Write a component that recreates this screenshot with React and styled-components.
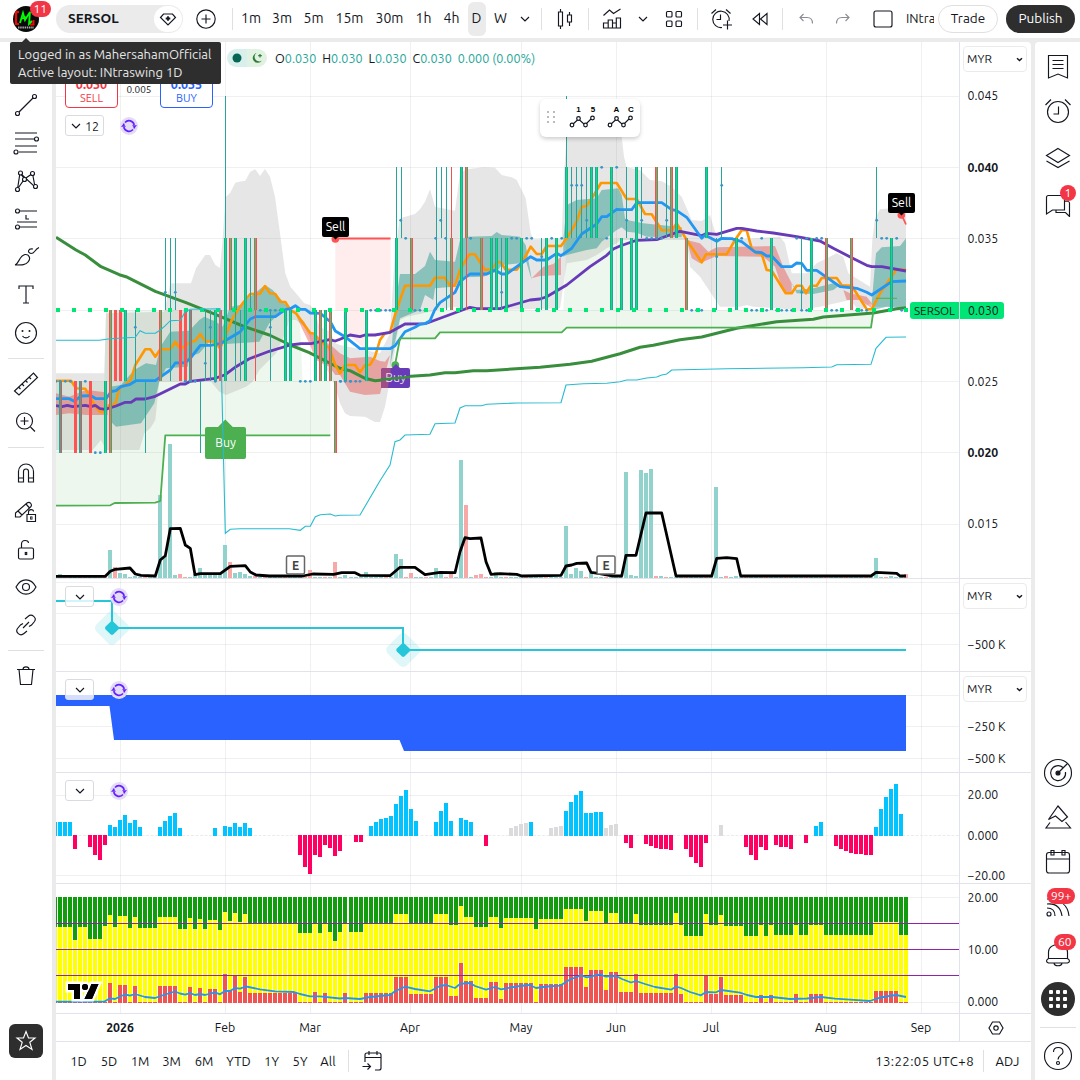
import React from "react";
import styled, { createGlobalStyle } from "styled-components";

const FONT = 'Ubuntu, "Noto Sans", "Open Sans", sans-serif';

// Chart helpers

const barX = (i) => Math.round(225.3 + i * 5.008);

// the series are recorded in thirds of a pixel, in three blocks
const ORIGIN = { a: 56, b: 340, c: 620 };
const trace = (block, text) =>
  text
    .trim()
    .split(/\s+/)
    .map((p) => {
      const [x, y] = p.split(",").map(Number);
      return `${(ORIGIN[block] + x / 3).toFixed(1)},${(140 + y / 3).toFixed(1)}`;
    })
    .join(" ");
const series = (a, b, c) =>
  [a && trace("a", a), b && trace("b", b), c && trace("c", c)]
    .filter(Boolean)
    .join(" ");

const MONTHS = [
  ["2026", 120],
  ["Feb", 225],
  ["Mar", 310],
  ["Apr", 410],
  ["May", 521],
  ["Jun", 616],
  ["Jul", 711],
  ["Aug", 826],
  ["Sep", 921],
];

const LEVEL = { T: 96, A: 167, B: 238, C: 310, D: 381, E: 453 };

// index, kind, from level, to level
// r = red, m = teal with red core, x = red with green core, g = green, t / w = thin teal / red
const CANDLES = `-33mDE -30rDE -29mDE -27rDE -24gDE -23xCE -22rCD -21rCD -20gCD -18tCD -16tDE -13xCD -12tBC
-11tBD -10tBC -9rCD -8rCD -7mCD -5tDE -4tCD -3tCD -2gCD -1rCD 0tTD 0gBD 1xBC 2gBC 2tCD 3tCD 4gBD 5tBC 6xBC 6wCD
9tCD 12gCD 13gCD 18gCD 19xCD 20gCD 21xCD 22xDE 24gCD 28gCD 34tAB 34gBC 35tAB 37xBC 42tAC 43tAB 44tAC 45wAB 45xBC
47gAC 48xAB 48wBC 51xBC 53gBC 54gBC 55tBC 56gBC 59gBC 63tBC 64gBC 66gBC 68tTB 68gAB 69tAB 70tAB 71tAB 72tAB 73gAB
74gAB 77gAC 79gBC 80tAB 81gBC 82gAC 83tAB 86xAB 88tAB 89xAB 90gAB 92xBC 96gAB 98tBC 99tAB 102gBC 109gBC 115tBC
117gBC 120xBC 125xBC 130tAB 133gBC`
  .split(/\s+/)
  .map((s) => {
    const [, i, kind, from, to] = s.match(/(-?\d+)(\w)(\w)(\w)/);
    return { i: Number(i), kind, from: LEVEL[from], to: LEVEL[to] };
  });

const DOTS = series(
  "0,724 12,724 28,724 43,724 88,724 118,938 133,938 328,457 358,457 238,562 463,562 448,670 388,724 403,724 418,724 478,724 613,511 628,511 643,511 658,511 673,511 643,562 733,724 748,724 763,724 853,724 868,724 883,724",
  "2,724 32,724 47,724 60,724 92,511 107,511 122,511 137,511 150,511 182,241 197,295 225,511 240,511 255,511 287,295 302,241 317,295 392,295 485,457 515,295 530,295 560,295 575,295 590,511 605,350 635,295 665,295 695,136 710,136 725,136 740,241 785,82 830,82 800,295 860,241",
  "65,241 80,295 95,295 110,295 125,295 140,241 215,511 230,511 245,511 290,350 305,136 365,295 425,295 395,511 410,511 440,511 470,511 485,511 500,511 515,511 545,511 560,511 545,457 530,295 560,295 590,295 605,295 635,511 650,511 665,511 710,511 725,511 740,511 770,241 785,295 800,295 830,295 845,511"
)
  .split(" ")
  .map((p) => p.split(",").map(Number));

const VOLUME = {
  "-33": 4, "-23": 28, "-22": -11, "-21": 5, "-20": 4, "-18": 2, "-13": 83, "-12": 22, "-11": 134, "-10": 3,
  "-9": -4, "-6": 4, "-5": 10, "-4": 5, "-3": 4, "-2": 4, "-1": 4, 0: 33, 1: -16, 2: 5, 3: 6, 4: 4, 5: 2, 6: -2,
  17: -8, 22: -16, 24: 3, 28: 6, 34: 24, 35: 19, 37: -5, 42: 10, 43: 6, 45: -4, 47: 118, 48: -73, 50: -3, 51: -4,
  54: 6, 68: 52, 69: 4, 70: 10, 71: 7, 73: 5, 80: 106, 81: 3, 82: 2, 83: 108, 84: 105, 85: 109, 86: -2, 87: 2,
  98: 91, 100: -2, 102: 2, 130: 20, 133: 2, 136: -4,
};

// start index, heights; the sign gives the direction
const MOMENTUM = [
  [-34, [14, 14, 14, 14, -13]],
  [-27, [-11, -19, -24, -9, 11, 9, 16, 21, 13, 16, 9]],
  [-13, [9, 15, 20, 23, 8]],
  [-2, [8]],
  [0, [10, 9, 13, 9, 13, 8]],
  [15, [-19, -31, -38, -19, -21, -9, -12, -20, -15]],
  [26, [-6, -6]],
  [29, [10, 14, 17, 18, 20, 32, 40, 46, 27, 15]],
  [42, [14, 25, 33, 15]],
  [47, [18, 16, 14]],
  [52, [-10]],
  [57, [8, 10, 12, 13], true],
  [61, [14]],
  [65, [8, 9, 10], true],
  [68, [25, 34, 41, 45, 23, 23, 24, 24]],
  [76, [8, 11, 12], true],
  [80, [-7, -12]],
  [84, [-8, -10, -12, -13, -13, -14]],
  [92, [-13, -21, -27, -31, -7]],
  [99, [11], true],
  [104, [-11, -19, -24, -11, -14]],
  [110, [-9, -11, -11, -13]],
  [116, [-7]],
  [118, [10, 14]],
  [122, [-10, -13, -15, -17, -18, -18, -19, -19, 9, 27, 39, 47, 52, 22]],
];

// run length, green depth, red height (thirds of a pixel)
const STRENGTH = [
  [4, 141, 366], [1, 180, 366], [2, 141, 366], [3, 177, 366], [1, 138, 366], [1, 105, 309], [1, 141, 366],
  [2, 108, 315], [1, 144, 366], [1, 111, 318], [4, 144, 366], [4, 111, 318], [2, 147, 366], [1, 114, 321],
  [1, 147, 366], [1, 117, 324], [1, 147, 366], [2, 120, 327], [1, 150, 366], [1, 96, 282], [1, 123, 333],
  [1, 99, 288], [1, 126, 336], [1, 102, 291], [10, 130, 339], [3, 159, 366], [1, 132, 336], [1, 159, 366],
  [1, 132, 339], [1, 156, 366], [1, 183, 366], [1, 156, 366], [1, 132, 339], [3, 156, 366], [6, 132, 339],
  [3, 102, 291], [5, 130, 342], [3, 102, 291], [2, 135, 348], [1, 78, 249], [2, 111, 303], [3, 141, 354],
  [2, 111, 306], [1, 144, 357], [6, 114, 309], [1, 147, 366], [5, 117, 312], [4, 87, 261], [1, 123, 321],
  [3, 93, 270], [1, 129, 330], [2, 99, 276], [3, 130, 336], [1, 102, 282], [7, 135, 339], [1, 99, 282],
  [1, 135, 342], [4, 168, 366], [1, 102, 288], [2, 135, 342], [1, 105, 291], [4, 138, 345], [3, 168, 366],
  [1, 135, 345], [1, 168, 366], [1, 135, 345], [4, 165, 366], [1, 135, 342], [2, 165, 366], [3, 135, 342],
  [10, 165, 366], [5, 126, 333], [2, 165, 366],
].flatMap(([n, green, red]) => Array.from({ length: n }, () => [green, red]));

const STRENGTH_LINE =
  "56,1001.7 104,1001.7 110,998.3 115,999 120,996.5 125,994.5 130,995.7 135,994 145,997 155,998 165,994.5 175,991.5 180,993.5 185,994.7 190,993.2 195,995 200,994 205,995 215,992.3 220,994.3 225,991 230,991 235,988 240,988.7 246,986.5 260,989.3 275,991.3 294,992 300,994 310,996.3 320,996.3 340,998.5 345,998 360,999 370,997 390,995 395,991.3 405,986.7 415,989 430,991.3 440,986 446,985 455,988 460,984 465,983.3 470,983 475,986 486,989.7 495,987 501,989.3 510,987.7 520,986 530,985 536,988 547,986.5 560,985.7 570,979.5 581,975.5 587,977.3 600,974.3 605,976.5 616,976 622,979 631,982.5 636,981 645,984 655,987 671,989.7 676,986.7 681,988 690,992 701,995.3 706,992 716,992.3 721,990 740,992.7 747,995 756,997 772,997 790,999 807,998.5 821,997 835,998.7 850,999.7 870,1001 877,998.5 886,996.5 896,995 906,997";

const SHAPES = {
  grey: [
    series(
      "0,700 145,700 150,520 325,515 343,430 405,430 420,385 448,345 462,345 478,375 492,384 500,295 508,172 523,158 538,128 550,125 568,122 583,95 598,88 612,108 627,87 642,110 657,170 672,280 688,400 703,440 720,460 745,490 763,495 778,520 790,560 823,575 838,610",
      "0,615 120,640 150,580 165,330 180,235 225,222 240,208 255,185 270,148 285,200 345,212 360,100 380,88 430,82 465,83 485,105 515,112 530,120 557,175 572,280 580,298 665,296 672,100 680,-9",
      "5,-9 12,50 20,82 60,90 90,120 125,124 155,140 185,170 215,240 245,243 270,225 285,275 320,300 480,290 495,310 515,400 560,400 590,370 650,340 670,350 685,400 750,440 757,300 765,235 780,208 858,200 858,500 760,500 750,490 720,515 690,480 600,500 540,510 400,500 380,495 360,500 300,500 260,440 240,410 210,380 200,300 0,300"
    ) +
      " " +
      series(
        "",
        "830,310 800,325 770,345 740,360 680,370 660,505 480,510 380,510 340,500 200,530 180,540 150,720 135,800 120,846 105,846 75,830 30,828 15,820 0,790"
      ) +
      " " +
      series(
        "838,740 820,700 790,660 765,600 745,560 720,540 700,540 688,580 660,640 640,660 610,690 590,725 570,740 510,765 490,755 465,725 310,725 298,840 283,865 265,880 250,930 150,930 135,900 110,930 0,930"
      ),
  ],
  teal: [
    series(
      "163,740 195,735 235,690 270,670 300,675 313,620 343,575 400,572 430,540 445,530 480,545 500,560 523,500 553,495 583,470 627,435 650,450 685,490 700,505 670,520 640,550 610,605 510,612 480,610 460,605 430,640 400,650 395,680 330,685 310,725 295,790 255,850 180,860 165,845"
    ),
    series(
      "",
      "150,680 165,500 180,402 225,402 255,378 270,335 285,360 345,365 360,300 380,290 455,288 470,276 485,285 540,290 557,315 572,400 575,420 557,360 540,370 485,375 470,395 430,410 375,412 340,440 285,445 280,480 255,465 240,510 180,535"
    ),
    series(
      "",
      "670,300 680,195 710,180 770,175 785,150 835,145 845,165 855,235",
      "20,240 70,250 185,262 185,292 80,290 50,278 20,275"
    ) +
      " " +
      series("", "845,262 830,270 785,305 770,325 740,330 680,345 670,350"),
    series("", "", "515,430 530,450 580,445 640,430 660,435 640,450 580,462 530,460"),
    series("", "", "755,490 768,340 785,322 840,318 858,295 858,505 800,500 760,510"),
  ],
  pink: [
    series("0,760 40,770 90,750 150,757 155,780 155,825 90,825 40,820 0,825"),
    series(
      "718,520 745,545 763,580 800,600 830,620",
      "0,640 30,655 90,650 120,663 135,665 150,645 120,762 75,765 30,755 0,705"
    ) +
      " " +
      series("838,705 820,680 780,660 760,610 740,570"),
    series("", "575,415 610,380 640,372 663,350 663,405 600,408"),
    series(
      "",
      "",
      "200,300 240,310 265,335 290,322 465,318 490,380 515,430 515,460 490,455 465,380 430,350 290,348 240,370 215,355"
    ),
    series("", "", "670,450 690,460 740,470 755,490 755,505 720,480 680,480"),
  ],
  green: [
    series(
      "0,725 145,725 150,511 730,511 740,724 823,724 823,886 328,886 313,1083 298,1088 176,1089 163,1096 0,1097"
    ),
    series("", "165,670 180,511 670,511 680,296", "195,296 200,511 755,511 755,563") +
      " " +
      series("", "680,563 665,577 300,577 285,595 180,595"),
  ],
};

const CYAN = series(
  "0,601 130,601 163,596 238,592 252,572 268,580 298,580 313,570 328,557 343,542 373,541 388,515 403,508 492,506 495,640 508,1180 523,1168 553,1166 700,1166 733,1171 748,1159 763,1159 778,1130 793,1124 823,1122 838,1128",
  "0,1126 60,1125 120,1022 150,975 165,905 180,900 195,885 270,883 285,851 345,849 360,804 375,797 425,797 440,793 530,789 663,788 678,735 730,731 800,730",
  "0,725 20,720 50,720 80,714 110,711 125,705 140,702 155,690 320,686 550,683 635,681 650,674 753,673 768,625 798,592 858,591"
);
const LONG_MA = series(
  "0,292 60,330 88,345 135,380 190,404 210,410 298,454 390,488 480,524 560,558 640,585 703,615 760,638 838,678",
  "0,685 30,692 75,715 105,722 150,718 190,710 270,705 315,698 345,698 400,692 440,692 600,682 690,673 755,664",
  "0,641 60,622 100,616 180,599 245,591 350,565 470,545 580,538 610,531 760,519 830,506 858,503"
);
const PURPLE = series(
  "0,797 18,800 34,796 50,800 88,796 105,800 118,796 132,806 148,808 180,798 208,787 225,787 240,777 268,777 295,770 373,732 388,732 403,724 478,715 508,704 540,680 580,656 640,634 703,615 735,611 765,611 820,599 838,603",
  "0,598 30,585 60,590 75,585 105,585 150,577 195,552 255,551 270,546 390,502 410,506 480,506 570,480 600,477 620,470 680,435 750,380 800,346 820,327",
  "0,318 50,301 110,299 180,274 245,287 260,280 290,283 350,265 365,265 410,273 460,279 530,290 600,303 640,325 695,353 740,376 755,380 785,380 858,393"
);
const BLUE = series(
  "0,776 40,776 55,784 75,768 105,767 120,776 150,776 165,755 180,752 195,740 220,734 240,722 298,722 343,690 358,669 388,668 403,655 433,616 463,616 495,610 520,595 553,575 583,537 598,530 658,530 675,518 690,508 703,506 718,497 733,508 748,508 763,519 793,520 823,545 838,573",
  "15,590 60,626 150,626 165,617 195,575 225,562 240,553 255,551 270,542 285,508 300,488 345,457 360,425 390,402 440,402 465,390 485,402 500,402 572,350 590,360 620,360 650,340 663,347 695,325 725,282 770,252 785,230 800,230 830,208",
  "0,209 35,209 50,188 125,188 155,209 170,212 200,232 245,295 255,285 290,304 305,295 335,296 365,305 405,336 425,338 440,348 455,348 485,380 515,380 530,369 545,370 560,391 590,391 660,440 710,445 740,457 755,465 815,425 858,423"
);
const ORANGE = series(
  "0,722 45,722 60,745 88,746 105,775 118,800 132,816 145,816 160,795 178,792 190,745 208,735 225,718 238,675 268,628 283,628 298,650 313,628 343,628 358,605 373,628 403,606 418,602 433,582 448,604 478,605 492,625 508,590 525,545 540,518 560,490 583,462 612,461 627,438 642,460 658,462 673,485 688,486 703,510 720,520 740,548 763,579 775,581 790,600 820,625 838,675",
  "0,700 15,675 45,675 60,697 75,675 90,674 105,650 120,600 135,580 150,578 165,525 180,480 195,437 270,437 285,413 315,413 330,437 345,437 360,390 388,343 405,343 435,390 455,388 470,367 482,367 497,389 530,389 545,370 572,320 590,342 605,342 620,318 663,318 680,295 710,245 725,200 740,198 760,168 783,129 830,129",
  "0,145 20,177 50,177 75,222 95,223 125,271 155,271 170,250 200,300 245,367 258,343 320,343 345,300 365,271 380,271 395,325 410,340 425,342 440,390 455,392 497,460 515,460 530,437 545,437 558,460 572,437 590,437 605,414 650,414 665,436 695,437 740,508 755,508 780,460 830,388 858,389"
);
const STOP_A = series("0,1097 163,1096 176,1089 298,1088 313,1083 328,886 823,886");
const STOP_B = series(
  "",
  "165,675 180,595 285,595 300,577 665,577 680,563",
  "0,563 753,563 760,515"
);
const VOLUME_MA = series(
  "0,1309 148,1309 163,1294 178,1288 222,1284 238,1302 255,1306 298,1308 313,1260 328,1247 343,1166 373,1165 388,1215 403,1225 417,1304 433,1301 493,1301 523,1279 568,1277 583,1296 600,1305 640,1308 740,1308 770,1302 833,1303",
  "5,1298 45,1298 60,1306 150,1307 180,1282 225,1282 255,1304 300,1297 345,1298 360,1235 375,1193 390,1196 423,1194 438,1265 453,1303 480,1301 530,1303 545,1308 663,1306 678,1278 695,1275 710,1270 740,1269 753,1297 775,1300 820,1308",
  "5,1308 18,1246 48,1246 78,1119 125,1119 168,1308 275,1308 290,1255 320,1253 350,1256 362,1308 753,1308 768,1297 830,1300 840,1308 858,1308"
);

// Icons, all on a 28px box centred on 0,0

const ICONS = {
  chevron: <path d="M-4-2 0 2 4-2" />,
  smallChevron: <path d="M-2.500-1.300 0 1 2.500-1.300" strokeWidth="1.5" />,
  plus: <><circle r="9.2" /><path d="M-4.5 0h9M0-4.5v9" /></>,
  candles: <path d="M-6.5-7h4V7h-4zM-4.5-10v3M-4.5 7v3M2.5-4h4v7h-4zM4.5-7v3M4.5 3v4" />,
  indicators: <path d="M-8.5-3.5-2.5-9 1.5-5.5 8.5-10M-8.5 9V4h4.7V1h4.3v3h3.8v-5h4.2V9zM-3.8 4v5M.5 4v5M4.3 3v6" />,
  layout: <><rect x="-7.5" y="-7.5" width="5.5" height="5.5" rx="1" /><rect x="2" y="-7.5" width="5.5" height="5.5" rx="1" /><rect x="-7.5" y="2" width="5.5" height="5.5" rx="1" /><rect x="2" y="2" width="5.5" height="5.5" rx="1" /></>,
  alert: <path d="M8 2A8.2 8.2 0 1 0 1 8.5M-.5-4.5V.5H-4.5M-9.5-5.5-5-9.5M9.5-5.5 5-9.5M6.5 1.5v9M2 6h9" />,
  replay: <path d="M-.5-5.5V5.5L-7 0zM7-5.5V5.5L.5 0z" />,
  undo: <path d="M-2.5-5-6-1.5-2.5 2M-6-1.5H1c3.5 0 5.500 2.500 5.500 6" stroke="#8b8d93" />,
  redo: <path d="M2.5-5 6-1.5 2.5 2M6-1.5H-1c-3.5 0-5.500 2.500-5.500 6" stroke="#8b8d93" />,
  frame: <rect x="-9" y="-8" width="18" height="16" rx="2" />,
  trend: <><path d="M-7 7 7-7" /><circle cx="-8.5" cy="8.5" r="2" fill="#fff" /><circle cx="8.5" cy="-8.5" r="2" fill="#fff" /></>,
  fib: <><path d="M-11-10H11M-11-4H8M-11 3H11M-7 9H11" /><circle cx="10.5" cy="-4" r="2" fill="#fff" /><circle cx="-10" cy="9" r="2" fill="#fff" /></>,
  pattern: <><path d="M-8.5 8-6-8 9 6 6.5-7.5-1.5-2zM-6-8-1.5-2" /><circle cx="-8.5" cy="8.5" r="2" fill="#fff" /><circle cx="-5.5" cy="-8" r="2" fill="#fff" /><circle cx="-1.5" cy="-1.5" r="2" fill="#fff" /><circle cx="6.5" cy="-7.5" r="2" fill="#fff" /><circle cx="9.5" cy="5.5" r="2" fill="#fff" /></>,
  projection: <><path d="M-6-8H11M-9 3H11M-6 8H11M0-4v4h3" /><circle cx="-8.5" cy="-8" r="2" /><circle cx="-8.5" cy="8" r="2" fill="#fff" /></>,
  brush: <path d="M-11 8C-7 7-7-1-1-2.500 3.500-3 5 2 2 5 0 8-4 8-11 8ZM7-8C2-9 1-4 5-3.500 9-3.500 8-7 13-9.500" />,
  text: <path d="M-7-6v-3H7v3M0-9V8M-3 8H3" />,
  smile: <><circle r="10.5" /><path d="M-3.5 3C-2 5.5 2 5.5 3.5 3" /><circle cx="-3.5" cy="-2" r="1" fill="#131722" stroke="none" /><circle cx="3.5" cy="-2" r="1" fill="#131722" stroke="none" /></>,
  ruler: <path d="M-11.500 7 7.500-11 11.500-6.500-7 11zM-7.500 3l2 2M-4 0l2 2M-.5-3.500l2 2M3-7l2 2" />,
  zoom: <><circle cx="-1.5" cy="-1" r="8" /><path d="M4.5 5 9 9.5M-5.5-1h8M-1.5-5v8" /></>,
  magnet: <path d="M-7.5 9V-1.5a7.5 7.5 0 0 1 15 0V9h-5V-1.5a2.5 2.5 0 0 0-5 0V9zM-7.5 5h5M2.5 5h5" />,
  pencilLock: <><path d="M-10.500 5V1L1-9C4-11 7-7 4.500-5L-6 5zM0-8 3.500-4M-8-1-4 3M1 2.500h8.500v7H1zM2.500 2.500V0c0-3 5-3 5-.5" /><rect x="4.700" y="5" width="1.200" height="2" /></>,
  lock: <><rect x="-7.500" y="-2" width="15" height="11" rx="1.500" /><path d="M-4.500-2v-4c0-4.500 7-4.500 7-1" /><rect x="-.7" y="2.500" width="1.400" height="2" /></>,
  eye: <><path d="M-10 0C-5-9.500 5-9.500 10 0 5 9.500-5 9.500-10 0Z" /><circle r="3.500" /></>,
  link: <path d="M-3 3 3-3M-1-6 2-8.500C6-12 11-7 8.500-3.500L5.500 0 3 1.500M1 6-2 8.500C-6 12-11 7-8.500 3.500L-5.500 0-3-1.500" />,
  trash: <path d="M-9-6.500H9M-7-6.500-5.500 8.500h11L7-6.500M-3-6.500C-3-10 3-10 3-6.500" />,
  star: <path d="M0-9.500 2.500-3H9L3.800 1.300 6 8.500 0 4.500-6 8.500-3.800 1.300-9-3h6.500z" stroke="#fff" />,
  list: <path d="M-9.500-11.500H9.500V11L0 7-9.500 11zM-5.500-6.500H5.500M-5.500-2.500H5.500M-5.500 1.500H5.500" />,
  clock: <><circle cy="1" r="10.500" /><path d="M.5-4.500V3h-5M-12.500-6-7-11.500M12.500-6 7-11.500" /></>,
  layers: <path d="M0-9.500 11.500-2.500 0 4.500-11.500-2.500zM-11.500 3 0 9.500 11.500 3" />,
  chat: <path d="M-9.500-7.500H6.500V7H-5.500L-11.500 11V-5.500q0-2 2-2M-2 7v2.500H7.500L11.500 13.500V0C11.500-2 9-2 6.500-2" />,
  radar: <><circle r="13.500" /><path d="M5-5.500A7.500 7.500 0 1 0 7.500-1M0 0 9.500-9.500" /><circle r="2" fill="#131722" /></>,
  mountain: <path d="M0-12 9.500-1 4 3.500-2.500-2-9.500 1.500zM-8 4.500-12 10H12.500L7.500 4" />,
  calendar: <path d="M-9-8.500H9q2.500 0 2.500 2.500V9.500q0 2.500-2.500 2.500H-9q-2.500 0-2.500-2.500V-6q0-2.500 2.500-2.500M-11.500-2H11.500M-7-10.500h3v4.500h-3zM4-10.500h3v4.500H4z" />,
  feed: <><circle cx="-9" cy="8" r="2" /><path d="M-11 2C-5 2-3 6-3 10M-11-2C-1-3 3 3 4 10M-11-7C3-7 10 0 11 10" /></>,
  bell: <path d="M-9.500 6V-1c0-10 19-10 19 0V6M-9.500 5.500h19q4 2.500 0 4.500h-19q-4-2 0-4.500M-4 10.500C-3 13.500 3 13.500 4 10.500" />,
  help: <><circle r="13.500" /><path d="M-4.500-4C-4.500-10 5-10 5-4 5-1 0-1 0 3.500" /><circle cy="7" r="1.500" /></>,
  goto: <path d="M-7 1V-6q0-2 2-2H7q2 0 2 2V7q0 2-2 2H3M-7-3.500H9M-3-10v4M5-10v4M-9.500 5.500h8M-4.500 2.500l3 3-3 3" />,
  settings: <><path d="M-3.500-6h7L7 0 3.500 6h-7L-7 0z" /><circle r="2.200" /></>,
  gem: <><path d="M-4.500-5h9L7.500-1.500 0 6-7.500-1.500z" strokeWidth="1.200" /><path d="M0-2.800v4.600M-2.300-.5h4.600" strokeWidth="1.800" /></>,
};

const Icon = ({ name, size = 28 }) => (
  <IconSvg width={size} height={size} viewBox={`${-size / 2} ${-size / 2} ${size} ${size}`}>
    {ICONS[name]}
  </IconSvg>
);

const Grid = ({ top, height, lines }) => (
  <g stroke="#2a2e39" strokeOpacity=".07">
    {MONTHS.map(([m, x]) => (
      <path key={m} d={`M${x + 0.5} ${top}v${height}`} />
    ))}
    {lines.map((y) => (
      <path key={y} d={`M56 ${y}h904`} />
    ))}
  </g>
);

const Candle = ({ i, kind, from, to }) => {
  const x = barX(i);
  const h = to - from;
  if (kind === "t" || kind === "w") {
    return <rect x={x} y={from} width="1" height={h} fill={kind === "t" ? "#26a69a" : "#ef5350"} />;
  }
  const edge = { r: "#ff5252", m: "#26a69a", x: "#ef5350", g: "#26a69a" }[kind];
  const core = { r: "#ff5252", m: "#ff5252", x: "#1fd67a", g: "#00e676" }[kind];
  return (
    <>
      <rect x={x - 1} y={from} width="3" height={h} fill={edge} />
      <rect x={x} y={from} width="1" height={h} fill={core} />
    </>
  );
};

const PricePane = () => (
  <PlotSvg width="903" height="536" viewBox="56 42 903 536">
    <Grid top={42} height={536} lines={[96.5, 167.5, 238.5, 310.5, 381.5, 452.5, 524.5]} />
    {SHAPES.green.map((p, i) => (
      <polygon key={i} points={p} fill="#4caf50" fillOpacity=".1" />
    ))}
    <path d="M335.300 238.500H390.500V310.500H366V350L345 332V310.500H335.300Z" fill="#ff5252" fillOpacity=".11" />
    {SHAPES.grey.map((p, i) => (
      <polygon key={i} points={p} fill="#808080" fillOpacity=".2" />
    ))}
    {SHAPES.teal.map((p, i) => (
      <polygon key={i} points={p} fill="#00897b" fillOpacity=".4" />
    ))}
    {SHAPES.pink.map((p, i) => (
      <polygon key={i} points={p} fill="#e53935" fillOpacity=".38" />
    ))}
    {Array.from({ length: 171 }, (_, k) => k - 34).map((i) => {
      const v = VOLUME[i] ?? (i % 4 === 0 ? -1 : 1);
      const h = Math.abs(v);
      return <rect key={i} x={barX(i) - 2} y={578 - h} width="4" height={h} fill={v < 0 ? "#f7a9a7" : "#92d2cc"} />;
    })}
    <g fill="none" strokeLinejoin="round">
      <polyline points={LONG_MA} stroke="#388e3c" strokeWidth="3" />
      <polyline points={ORANGE} stroke="#ff9800" strokeWidth="2.600" />
      <polyline points={PURPLE} stroke="#673ab7" strokeWidth="2.800" />
      <polyline points={BLUE} stroke="#2196f3" strokeWidth="2.800" />
    </g>
    {CANDLES.map((c, i) => (
      <Candle key={i} {...c} />
    ))}
    {DOTS.map(([x, y], i) => (
      <circle key={i} cx={x} cy={y} r="1.400" fill="#3596c8" />
    ))}
    <path d="M56 310H908" stroke="#00e676" strokeWidth="4" strokeDasharray="4 12" />
    <g fill="none" strokeLinejoin="round">
      <polyline points={STOP_A} stroke="#4caf50" strokeWidth="1.800" />
      <polyline points={STOP_B} stroke="#4caf50" strokeWidth="1.800" />
      <path d="M876 298.300h21" stroke="#4caf50" />
      <path d="M335 238.500h55.500M901.500 214.500l4.500 10" stroke="#ff5252" strokeWidth="1.800" />
      <polyline points={VOLUME_MA} stroke="#000" strokeWidth="2.800" />
    </g>
    <circle cx="335.300" cy="239" r="3.800" fill="#ff5252" />
    <circle cx="901.300" cy="215" r="3.800" fill="#ff5252" />
    <circle cx="395.300" cy="365" r="3.800" fill="#4caf50" />
    <path d="M207 427h11l7.300-7.500 7.500 7.500H244q2 0 2 2v28q0 2-2 2H207q-2 0-2-2v-28q0-2 2-2Z" fill="#4caf50" />
    <path d="M383 368h9l4-4 4 4h8q2 0 2 2v16q0 2-2 2h-25q-2 0-2-2v-16q0-2 2-2Z" fill="#673ab7" />
    <path d="M381 370 383 368H391L388 388H381Z" fill="#a04c88" />
    <path d="M324 217h23q2 0 2 2v16q0 2-2 2h-9l-2.500 2.500-2.500-2.500h-9q-2 0-2-2v-16q0-2 2-2Z" />
    <path d="M890 193h23q2 0 2 2v16q0 2-2 2h-9l-2.500 2.500-2.500-2.500h-9q-2 0-2-2v-16q0-2 2-2Z" />
    <Flag x="225.500" y="447">Buy</Flag>
    <Flag x="395.500" y="382" fillOpacity=".8">Buy</Flag>
    <Flag x="335.500" y="231">Sell</Flag>
    <Flag x="901.500" y="207">Sell</Flag>
    <polyline points={CYAN} fill="none" stroke="#26bcd0" strokeWidth="1.100" />
    <path d="M381 379.500 410 377" stroke="#388e3c" strokeWidth="2.600" />
    {[295.5, 606].map((x) => (
      <g key={x}>
        <rect x={x - 9} y="556" width="18" height="18" rx="1.500" fill="#fff" stroke="#666" strokeWidth="1.500" />
        <text x={x} y="569.500" textAnchor="middle" fontFamily={FONT} fontSize="12" fontWeight="600" fill="#444">E</text>
      </g>
    ))}
    <path d="M913 302h46v17h-46q-3 0-3-3v-11q0-3 3-3Z" fill="#00e676" />
    <text x="914" y="315" textLength="41" lengthAdjust="spacingAndGlyphs" fontFamily={FONT} fontSize="12" fill="#131722">SERSOL</text>
  </PlotSvg>
);

const StepPane = () => (
  <PlotSvg width="903" height="92" viewBox="56 579 903 92">
    <Grid top={579} height={92} lines={[582.5, 613.5, 644.5]} />
    <path d="M56 601H112V628H403V650H906" fill="none" stroke="#26c6da" strokeWidth="2" />
    {[[112, 628], [403.2, 650]].map(([x, y]) => (
      <g key={x} transform={`translate(${x} ${y}) rotate(45)`} fill="#26c6da">
        <rect x="-13.500" y="-13.500" width="27" height="27" rx="5" fillOpacity=".15" />
        <rect x="-5.500" y="-5.500" width="11" height="11" rx="2" />
      </g>
    ))}
  </PlotSvg>
);

const AreaPane = () => (
  <PlotSvg width="903" height="100" viewBox="56 672 903 100">
    <Grid top={672} height={100} lines={[695.5, 726.5, 758.5]} />
    <path d="M56 695H906V751H404L399.500 740H114L109.500 706H56Z" fill="#2962ff" />
  </PlotSvg>
);

const MomentumPane = () => (
  <PlotSvg width="903" height="110" viewBox="56 773 903 110">
    <Grid top={773} height={110} lines={[795.5, 875.5]} />
    <path d="M56 835.500H959" stroke="#ececec" strokeDasharray="3 1.500" />
    {MOMENTUM.map(([start, values, muted]) =>
      values.map((v, k) => (
        <rect
          key={start + k}
          x={barX(start + k) - 2}
          y={v > 0 ? 836 - v : 835}
          width="4"
          height={Math.abs(v) + (v > 0 ? 0 : 1)}
          fill={muted ? "#dbdbde" : v > 0 ? "#00c3ff" : "#ff0062"}
        />
      ))
    )}
  </PlotSvg>
);

const StrengthPane = () => (
  <PlotSvg width="903" height="129" viewBox="56 884 903 129">
    <Grid top={884} height={129} lines={[897.5, 1002.5]} />
    {STRENGTH.map(([green, red], k) => {
      const x = barX(k - 34) - 2;
      return (
        <g key={k} shapeRendering="crispEdges">
          <rect x={x} y="897" width="4" height="106" fill="#ff0" />
          <rect x={x} y="897" width="4" height={green / 3 - 17} fill="#109c0c" />
          <rect x={x} y={880 + red / 3} width="4" height={123 - red / 3} fill="#f05350" />
        </g>
      );
    })}
    <path d="M56 923.500H959M56 949.500H959M56 975.500H959" stroke="#8e24aa" />
    <polyline points={STRENGTH_LINE} fill="none" stroke="#2196f3" strokeWidth="1.800" strokeLinejoin="round" />
    {/* logo */}
    <g stroke="#fff" strokeWidth="5" paintOrder="stroke">
      <path d="M68 984H80V999H74V990H68Z" />
      <path d="M91.500 984H98.500L92 999H84.500Z" />
      <circle cx="85" cy="987" r="3" />
    </g>
    <path d="M68 984H80V999H74V990H68ZM91.500 984H98.500L92 999H84.500Z" />
    <circle cx="85" cy="987" r="3" />
  </PlotSvg>
);

const Ticks = ({ top, height, ticks }) => (
  <PlotSvg width="71" height={height} viewBox={`960 ${top} 71 ${height}`}>
    {ticks.map(([label, y, bold]) => (
      <Tick key={label} x="967.500" y={y + 4} $bold={bold}>
        {label}
      </Tick>
    ))}
  </PlotSvg>
);

const Currency = () => (
  <CurrencyBox>
    <span>MYR</span> <Icon name="smallChevron" size={9} />
  </CurrencyBox>
);

const Sync = () => (
  <SyncBadge width="18" height="18" viewBox="-9 -9 18 18">
    <circle r="9" fill="#e3dcf6" />
    <g fill="none" stroke="#651fff" strokeWidth="1.600">
      <path d="M-4-3.500A5.300 5.300 0 0 1 5.200-1M4 3.500A5.300 5.300 0 0 1-5.200 1" />
      <path d="M-5.300-1V-2.500M5.300 1V2.500" />
    </g>
    <path d="M3-.8h5L5.500 2zM-3 .8h-5L-5.500-2z" fill="#651fff" />
  </SyncBadge>
);

const PaneLegend = () => (
  <Legend $top={7}>
    <Collapse>
      <Icon name="chevron" size={12} />
    </Collapse>
    <Sync />
  </Legend>
);

const Wave = ({ from, to }) => (
  <svg width="30" height="28" viewBox="0 0 30 28">
    <g fill="none" stroke="#131722" strokeWidth="1.200">
      <path d="M3 21 9.500 15 16 21 23 14" />
      {[[3, 21], [9.5, 14.5], [16.5, 21], [23.5, 14]].map(([x, y]) => (
        <circle key={x} cx={x} cy={y} r="1.800" fill="#fff" />
      ))}
    </g>
    <g fontFamily="Liberation Sans, sans-serif" fontSize="8" fontWeight="700" textAnchor="middle">
      <text x="9.500" y="7.500">{from}</text>
      <text x="24" y="7.500">{to}</text>
    </g>
  </svg>
);

const INTERVALS = [["1m", 31], ["3m", 31], ["5m", 32], ["15m", 40], ["30m", 40], ["1h", 28], ["4h", 28], ["D", 22, true], ["W", 26]];
const RANGES = [["1D", 30], ["5D", 31], ["1M", 31], ["3M", 32], ["6M", 33], ["YTD", 36], ["1Y", 30], ["5Y", 27], ["All", 29]];
const TOOLS = [["trend", 38], ["fib", 38], ["pattern", 38], ["projection", 38], ["brush", 38], ["text", 38], ["smile", 38], [null, 12], ["ruler", 39], ["zoom", 38], [null, 13], ["magnet", 38], ["pencilLock", 39], ["lock", 37], ["eye", 38], ["link", 38], [null, 13], ["trash", 38]];

export default function App() {
  return (
    <Page>
      <GlobalStyle />
      <Header>
        <Slot $w={56}>
          <Avatar>
            <svg width="28" height="28" viewBox="-14 -14 28 28">
              <circle r="13" fill="#090909" />
              <path d="M-7-7h-3V5h3M6-7M7.500 1V5.500H4" fill="none" stroke="#f00" strokeWidth="2" />
              <path d="M-6 4-3-6-1 1 4-7 3 5 6 2M-5 0 0-2" fill="none" stroke="#0f0" strokeWidth="1.800" />
              <path d="M-8 8.500H8" stroke="#aaa" strokeWidth="2" strokeDasharray="1.500 .7" />
            </svg>
            <Count $top={-4} $left={18}>11</Count>
          </Avatar>
        </Slot>
        <Search>
          <span>SERSOL</span>
          <Gem>
            <Icon name="gem" size={20} />
          </Gem>
        </Search>
        <Slot $w={46}><Icon name="plus" /></Slot>
        <Divider $w={7} />
        {INTERVALS.map(([label, w, active]) => (
          <LabelSlot key={label} $w={w}>
            {active ? <Active>{label}</Active> : label}
          </LabelSlot>
        ))}
        <Slot $w={22}><Icon name="chevron" size={14} /></Slot>
        <Divider $w={11} />
        <Slot $w={36}><Icon name="candles" /></Slot>
        <Divider $w={10} />
        <Slot $w={38}><Icon name="indicators" /></Slot>
        <Slot $w={24}><Icon name="chevron" size={14} /></Slot>
        <Slot $w={38}><Icon name="layout" /></Slot>
        <Divider $w={8} />
        <Slot $w={40}><Icon name="alert" /></Slot>
        <Slot $w={38}><Icon name="replay" /></Slot>
        <Divider $w={6} />
        <Slot $w={42}><Icon name="undo" /></Slot>
        <Slot $w={32}><Icon name="redo" /></Slot>
        <Slot $w={47}><Icon name="frame" /></Slot>
        <LayoutName>INtra</LayoutName>
        <Trade>Trade</Trade>
        <Publish>Publish</Publish>
      </Header>
      <Body>
        <Tools>
          {TOOLS.map(([name, h], i) => (
            <ToolSlot key={i} $h={h}>{name ? <Icon name={name} /> : <Rule />}</ToolSlot>
          ))}
          <StarButton><Icon name="star" size={24} /></StarButton>
        </Tools>
        <Chart>
          <Pane $h={537}>
            <Plot>
              <PricePane />
              <Status>
                <Market>
                  <span>
                    <svg width="10" height="10"><circle cx="5" cy="5" r="4.500" fill="#056656" /></svg>
                  </span>
                  <span>
                    <svg width="12" height="12" viewBox="0 0 12 12">
                      <path d="M5.500 1A5 5 0 1 0 11 8.500 4.500 4.500 0 0 1 5.500 1Z" fill="#2e7d32" />
                      <path d="M9 2v3.500M7.200 3.700h3.600" stroke="#2e7d32" strokeWidth="1.200" />
                    </svg>
                  </span>
                </Market>
                <Ohlc>
                  {["O", "H", "L", "C"].map((k) => (
                    <span key={k}><i>{k}</i>0.030</span>
                  ))}
                  <span>0.000 (0.00%)</span>
                </Ohlc>
              </Status>
              <Orders>
                <Order $color="#f23645"><b>0.030</b>SELL</Order>
                <Spread>0.005</Spread>
                <Order $color="#2962ff"><b>0.035</b>BUY</Order>
              </Orders>
              <Legend $top={73}>
                <Collapse $wide><Icon name="chevron" size={12} />12</Collapse>
                <Sync />
              </Legend>
              <Floating>
                <svg width="14" height="14" viewBox="0 0 14 14" fill="#b9bbc1">
                  {[0, 5, 10].map((y) => (
                    <g key={y}><rect y={y} width="2" height="2" /><rect x="6" y={y} width="2" height="2" /></g>
                  ))}
                </svg>
                <Wave from="1" to="5" />
                <Wave from="A" to="C" />
              </Floating>
            </Plot>
            <Axis>
              <Ticks top={42} height={536} ticks={[["0.045", 96], ["0.040", 167.5, true], ["0.035", 238.5], ["0.025", 381.5], ["0.020", 452.5, true], ["0.015", 523.5]]} />
              <Currency />
              <LastPrice>0.030</LastPrice>
            </Axis>
          </Pane>
          <Pane $h={93}>
            <Plot><StepPane /><PaneLegend /></Plot>
            <Axis>
              <Ticks top={579} height={92} ticks={[["−500 K", 645]]} />
              <Currency />
            </Axis>
          </Pane>
          <Pane $h={101}>
            <Plot><AreaPane /><PaneLegend /></Plot>
            <Axis>
              <Ticks top={672} height={100} ticks={[["−250 K", 727], ["−500 K", 759]]} />
              <Currency />
            </Axis>
          </Pane>
          <Pane $h={111}>
            <Plot><MomentumPane /><PaneLegend /></Plot>
            <Axis><Ticks top={773} height={110} ticks={[["20.00", 795], ["0.000", 836], ["−20.00", 876]]} /></Axis>
          </Pane>
          <Pane $h={130}>
            <Plot><StrengthPane /></Plot>
            <Axis><Ticks top={884} height={129} ticks={[["20.00", 898], ["10.00", 950], ["0.000", 1002]]} /></Axis>
          </Pane>
          <Pane $h={28}>
            <Plot>
              <PlotSvg width="903" height="27" viewBox="56 1014 903 27">
                {MONTHS.map(([m, x]) => (
                  <Tick key={m} x={x} y="1032" textAnchor="middle" $bold={m === "2026"}>{m}</Tick>
                ))}
              </PlotSvg>
            </Plot>
            <Axis $center><Icon name="settings" size={20} /></Axis>
          </Pane>
          <Footer>
            {RANGES.map(([label, w]) => (
              <LabelSlot key={label} $w={w}>{label}</LabelSlot>
            ))}
            <Divider $w={10} />
            <Slot $w={38}><Icon name="goto" /></Slot>
            <Clock>13:22:05 UTC+8</Clock>
            <Divider $w={3} />
            <LabelSlot $w={46}>ADJ</LabelSlot>
          </Footer>
        </Chart>
        <Widgets>
          <ToolSlot $h={42}><Icon name="list" /></ToolSlot>
          <ToolSlot $h={46}><Icon name="clock" /></ToolSlot>
          <ToolSlot $h={47}><Icon name="layers" /></ToolSlot>
          <ToolSlot $h={44}><Icon name="chat" /><Count $top={4} $left={25}>1</Count></ToolSlot>
          <Spacer />
          <ToolSlot $h={46}><Icon name="radar" size={30} /></ToolSlot>
          <ToolSlot $h={43}><Icon name="mountain" /></ToolSlot>
          <ToolSlot $h={43}><Icon name="calendar" /></ToolSlot>
          <ToolSlot $h={48}><Icon name="feed" /><Count $top={6} $left={12}>99+</Count></ToolSlot>
          <ToolSlot $h={46}><Icon name="bell" /><Count $top={4} $left={19}>60</Count></ToolSlot>
          <ToolSlot $h={46}>
            <Apps>{Array.from({ length: 9 }, (_, i) => <span key={i} />)}</Apps>
          </ToolSlot>
          <ToolSlot $h={11}><Rule /></ToolSlot>
          <ToolSlot $h={46}><Icon name="help" size={30} /></ToolSlot>
        </Widgets>
      </Body>
      <Tooltip>
        Logged in as MahersahamOfficial
        <br />
        Active layout: INtraswing 1D
      </Tooltip>
    </Page>
  );
}

const GlobalStyle = createGlobalStyle`
  * { box-sizing: border-box; }
  body { margin: 0; overflow: hidden; }
`;

const Page = styled.div`
  position: relative;
  display: flex;
  flex-direction: column;
  gap: 4px;
  width: 1080px;
  height: 1080px;
  overflow: hidden;
  background: #ebebeb;
  color: #131722;
  font-family: ${FONT};
  font-size: 14px;
`;

const IconSvg = styled.svg`
  flex: none;
  display: block;
  fill: none;
  stroke: #131722;
  stroke-width: 1.15;
`;

const PlotSvg = styled.svg`
  display: block;
`;

const Header = styled.header`
  display: flex;
  align-items: center;
  height: 38px;
  background: #fff;
`;

const Slot = styled.div`
  display: flex;
  flex: none;
  align-items: center;
  justify-content: center;
  width: ${({ $w }) => $w}px;
  height: 100%;
`;

const LabelSlot = styled(Slot)`
  padding: 0 1px 2px 0;
  font-size: 14px;
  white-space: nowrap;
`;

const Divider = styled.div`
  flex: none;
  width: ${({ $w }) => $w}px;
  height: 22px;
  background: linear-gradient(#e0e0e0, #e0e0e0) center / 1px 100% no-repeat;
`;

const Avatar = styled.div`
  position: relative;
  width: 28px;
  height: 28px;
  margin-right: 5px;
`;

const Count = styled.span`
  position: absolute;
  top: ${({ $top }) => $top}px;
  left: ${({ $left }) => $left}px;
  min-width: 16px;
  height: 16px;
  padding: 0 4px;
  border-radius: 8px;
  background: #f23645;
  color: #fff;
  font-size: 12px;
  line-height: 15px;
  text-align: center;
`;

const Search = styled.div`
  display: flex;
  align-items: center;
  justify-content: space-between;
  width: 127px;
  height: 28px;
  padding: 0 1px 0 12px;
  border-radius: 14px;
  background: #ebebeb;
  font-size: 13.6px;
  font-weight: 700;
  line-height: 24px;

  > span:first-child {
    padding-bottom: 2px;
  }
`;

const Gem = styled.span`
  display: grid;
  place-items: center;
  width: 28px;
  height: 26px;
  border-radius: 13px;
  background: #fff;
`;

const Active = styled.span`
  width: 18px;
  margin-top: 2px;
  padding-bottom: 2px;
  border-radius: 6px;
  background: #ebebeb;
  line-height: 32px;
  text-align: center;
`;

const LayoutName = styled.div`
  width: 28px;
  margin-right: 4px;
  padding-bottom: 2px;
  overflow: hidden;
  font-size: 13px;
`;

const Trade = styled.button`
  width: 60px;
  height: 28px;
  padding: 0 0 2px;
  border: 1px solid #e0e0e0;
  border-radius: 14px;
  background: #fff;
  color: #131722;
  font: 13.5px ${FONT};
`;

const Publish = styled(Trade)`
  width: 69px;
  margin-left: 8px;
  border: 0;
  background: #2e2e2e;
  color: #fff;
`;

const Body = styled.div`
  display: flex;
  gap: 4px;
  flex: 1;
`;

const Tools = styled.nav`
  display: flex;
  flex-direction: column;
  width: 52px;
  padding-top: 44px;
  border-top-right-radius: 4px;
  background: #fff;
`;

const ToolSlot = styled.div`
  position: relative;
  display: flex;
  flex: none;
  align-items: center;
  justify-content: center;
  height: ${({ $h }) => $h}px;
`;

const Rule = styled.i`
  width: 36px;
  height: 1px;
  background: #e0e0e0;
`;

const StarButton = styled.div`
  display: grid;
  place-items: center;
  width: 34px;
  height: 34px;
  margin: auto 0 22px 9px;
  border-radius: 6px;
  background: #2e2e2e;
`;

const Chart = styled.main`
  width: 975px;
  overflow: hidden;
  border-radius: 4px 4px 0 0;
  background: #fff;
`;

const Pane = styled.section`
  display: flex;
  height: ${({ $h }) => $h}px;
  border-bottom: 1px solid #e0e3eb;
`;

const Plot = styled.div`
  position: relative;
  width: 903px;
`;

const Axis = styled.div`
  position: relative;
  display: ${({ $center }) => ($center ? "grid" : "block")};
  place-items: center;
  width: 72px;
  border-left: 1px solid #e0e3eb;
`;

const Tick = styled.text`
  fill: #131722;
  font-size: 12.3px;
  font-weight: ${({ $bold }) => ($bold ? 700 : 400)};
`;

const CurrencyBox = styled.div`
  position: absolute;
  top: 4px;
  left: 3px;
  display: flex;
  align-items: center;
  justify-content: space-between;
  width: 64px;
  height: 26px;
  padding: 0 2px 0 3px;
  border: 1px solid #ebebeb;
  border-radius: 4px;
  background: #fff;
  font-size: 12px;

  span {
    padding-bottom: 2px;
  }
`;

const LastPrice = styled.div`
  position: absolute;
  top: 260px;
  left: 0;
  width: 44px;
  border-radius: 0 3px 3px 0;
  background: #00e676;
  font-size: 12.3px;
  line-height: 17px;
  padding-left: 8px;
`;

const Legend = styled.div`
  position: absolute;
  top: ${({ $top }) => $top}px;
  left: 9px;
  display: flex;
  align-items: center;
  gap: 16px;
`;

const Collapse = styled.div`
  display: flex;
  align-items: center;
  justify-content: center;
  gap: 3px;
  width: ${({ $wide }) => ($wide ? 39 : 29)}px;
  height: 21px;
  border: 1px solid #d9dbe0;
  border-radius: 3px;
  background: rgba(255, 255, 255, 0.8);
  font-size: 12.5px;
`;

const SyncBadge = styled.svg`
  display: block;
`;

const Status = styled.div`
  position: absolute;
  top: 7px;
  left: 171px;
  display: flex;
  align-items: center;
  gap: 8px;
  height: 18px;
`;

const Market = styled.div`
  display: flex;
  width: 40px;
  height: 18px;
  overflow: hidden;
  border-radius: 9px;

  span {
    display: grid;
    flex: 1;
    place-items: center;
    background: #d9efec;
  }
  span + span {
    background: #e2f2e2;
  }
`;

const Ohlc = styled.div`
  display: flex;
  gap: 6px;
  color: #26a69a;
  font-size: 12.6px;
  white-space: nowrap;

  i {
    color: #131722;
    font-style: normal;
  }
`;

const Orders = styled.div`
  position: absolute;
  top: 33px;
  left: 9px;
  display: flex;
`;

const Order = styled.div`
  display: flex;
  flex-direction: column;
  align-items: center;
  width: 53px;
  height: 33px;
  border: 1px solid ${({ $color }) => $color};
  border-radius: 4px;
  background: #fff;
  color: ${({ $color }) => $color};
  font-size: 11px;
  line-height: 13px;

  b {
    font-size: 12.5px;
    line-height: 16px;
  }
`;

const Spread = styled.div`
  width: 42px;
  padding-top: 9px;
  font-size: 10px;
  text-align: center;
`;

const Floating = styled.div`
  position: absolute;
  top: 57px;
  left: 484px;
  display: flex;
  align-items: center;
  gap: 8px;
  width: 100px;
  height: 38px;
  padding-left: 7px;
  border-radius: 6px;
  background: #fff;
  box-shadow: 0 2px 4px rgba(0, 0, 0, 0.2);
`;

const Flag = styled.text`
  fill: #fff;
  font-family: ${FONT};
  font-size: 12.3px;
  text-anchor: middle;
`;

const Footer = styled.footer`
  display: flex;
  align-items: center;
  height: 38px;
  padding-left: 8px;

  ${LabelSlot} {
    padding-bottom: 1px;
    font-size: 13px;
  }
`;

const Clock = styled.div`
  margin-left: auto;
  padding: 0 8px 1px 0;
  font-size: 13.2px;
  letter-spacing: 0.4px;
`;

const Widgets = styled.aside`
  display: flex;
  flex-direction: column;
  width: 45px;
  padding: 4px 0 1px;
  border-top-left-radius: 4px;
  background: #fff;
`;

const Spacer = styled.div`
  flex: 1;
`;

const Apps = styled.div`
  display: grid;
  grid-template-columns: repeat(3, 4px);
  gap: 3px;
  place-content: center;
  width: 34px;
  height: 34px;
  border-radius: 50%;
  background: #2e2e2e;

  span {
    height: 4px;
    border-radius: 1px;
    background: #fff;
  }
`;

const Tooltip = styled.div`
  position: absolute;
  top: 42px;
  left: 10px;
  width: 211px;
  height: 42px;
  padding: 3px 8px;
  border-radius: 2px;
  background: #2e2e2e;
  color: #e6e6e6;
  font-size: 13px;
  line-height: 18px;
  white-space: nowrap;

  &::before {
    content: "";
    position: absolute;
    top: -4px;
    left: 11px;
    border: 5px solid transparent;
    border-top: 0;
    border-bottom-color: #2e2e2e;
  }
`;
